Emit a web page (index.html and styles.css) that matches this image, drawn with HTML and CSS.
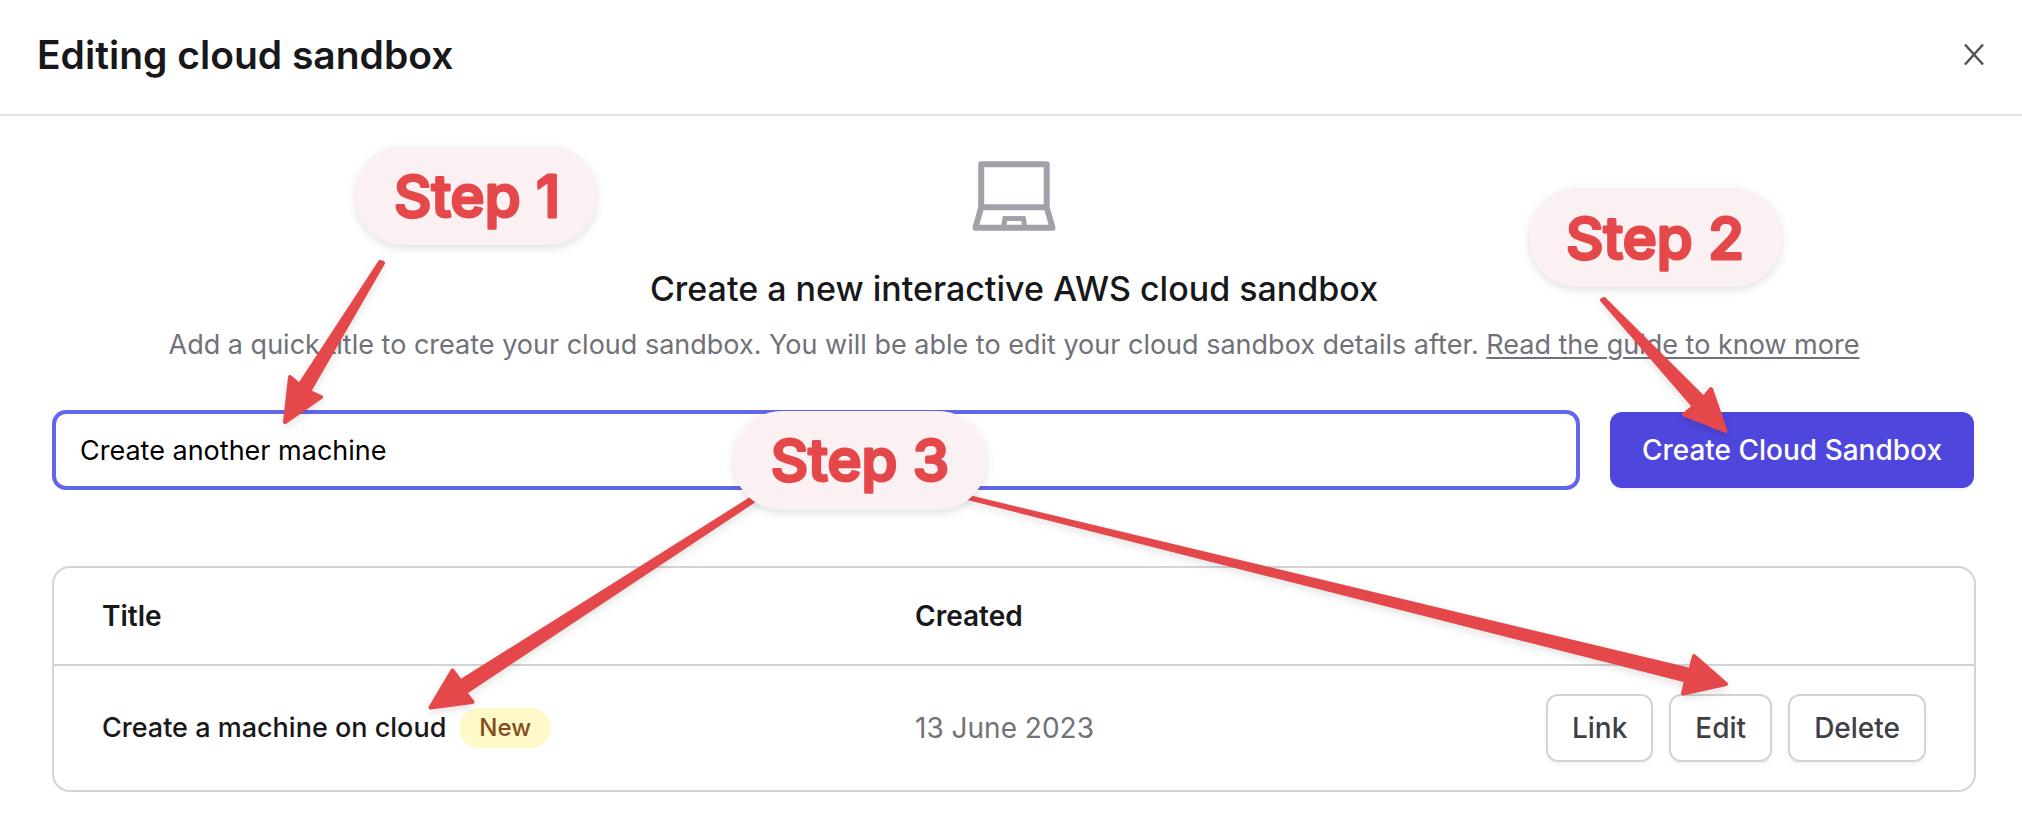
FILE: index.html
```html
<!DOCTYPE html>
<html lang="en">
<head>
<meta charset="utf-8">
<meta name="viewport" content="width=device-width, initial-scale=1">
<title>Editing cloud sandbox</title>
<link rel="stylesheet" href="styles.css">
</head>
<body>
<header class="header">
  <h1 class="header-title">Editing cloud sandbox</h1>
  <button class="close" type="button" aria-label="Close">
    <svg width="22" height="24" viewBox="0 0 22 24" aria-hidden="true"><path d="M2 1.500L20 21.500M20 1.500L2 21.500"/></svg>
  </button>
</header>
<main class="main">
  <section class="intro">
    <svg class="laptop" width="84" height="70" viewBox="0 0 84 70" aria-hidden="true">
      <path d="M9.2 46.3V3.2H74.7V46.3"/>
      <path d="M9.2 46.3H74.7L80.5 66.8H3.5Z"/>
      <path class="laptop-pad" d="M31.5 66.5L33 57.5H51.3L53 66.5"/>
    </svg>
    <h2 class="intro-title">Create a new interactive AWS cloud sandbox</h2>
    <p class="intro-text">Add a quick title to create your cloud sandbox. You will be able to edit your cloud sandbox details after. <a class="guide" href="#guide">Read the guide to know more</a></p>
  </section>
  <form class="form">
    <input class="field" type="text" aria-label="Sandbox title" value="Create another machine">
    <button class="submit" type="button">Create Cloud Sandbox</button>
  </form>
  <div class="card">
    <table class="table">
      <thead>
        <tr><th class="col-title" scope="col">Title</th><th class="col-created" scope="col">Created</th><td></td></tr>
      </thead>
      <tbody>
        <tr>
          <td class="name"><div class="name-row"><span>Create a machine on cloud</span><span class="badge">New</span></div></td>
          <td class="date">13 June 2023</td>
          <td>
            <div class="actions">
              <button class="action" type="button">Link</button>
              <button class="action" type="button">Edit</button>
              <button class="action" type="button">Delete</button>
            </div>
          </td>
        </tr>
      </tbody>
    </table>
  </div>
</main>
<svg class="notes" width="2022" height="826" viewBox="0 0 2022 826">
  <g class="arrow">
    <path d="M380 262L383 263L309 391.5L321 397L285 422L290 377L299.5 385Z"/>
    <path d="M1602 300L1604 299L1703.5 398L1711 389L1725.5 431L1684 414.5L1694 406.5Z"/>
    <path d="M765 490L767 492L465 692.5L472.5 702L430.5 707.5L452.5 670.5L460.5 681.5Z"/>
    <path d="M958 494.5L958 495.5L1686 680.5L1683 693.5L1726 684L1694 656L1690.5 670Z"/>
  </g>
  <g class="pill">
    <rect x="355" y="146" width="242" height="99" rx="49"/>
    <rect x="1529" y="188" width="253" height="99" rx="49"/>
    <rect x="733" y="411" width="254" height="99" rx="49"/>
  </g>
  <g class="step">
    <text x="477" y="217">Step 1</text>
    <text x="1655" y="259">Step 2</text>
    <text x="860" y="481">Step 3</text>
  </g>
</svg>
</body>
</html>
```
FILE: styles.css
```css
* { box-sizing: border-box; }
body {
  position: relative;
  margin: 0;
  background: #fff;
  color: #18181b;
  font-family: Inter, "Liberation Sans", sans-serif;
  font-size: 28px;
  line-height: 40px;
}
h1, h2, p { margin: 0; }
button, input { font: inherit; }
.header {
  display: flex;
  align-items: center;
  justify-content: space-between;
  padding: 28px 37px 32px;
  border-bottom: 2px solid #e4e4e7;
}
.header-title { font-size: 39px; line-height: 54px; font-weight: 600; }
.close {
  display: flex;
  padding: 0;
  border: 0;
  background: none;
}
.close svg { fill: none; stroke: #52525b; stroke-width: 2.5; }
.main { padding: 45px 46px 34px 52px; }
.intro {
  display: flex;
  flex-direction: column;
  align-items: center;
  text-align: center;
}
.laptop {
  fill: none;
  stroke: #a1a1aa;
  stroke-width: 6;
  stroke-linejoin: round;
}
.laptop-pad { stroke-width: 5; stroke-linejoin: miter; }
.intro-title {
  margin-top: 36px;
  font-size: 34px;
  line-height: 44px;
  font-weight: 500;
}
.intro-text { margin-top: 14px; color: #71717a; font-size: 27px; }
.guide { color: inherit; text-underline-offset: 3px; text-decoration-thickness: 2px; }
.form {
  display: flex;
  gap: 32px;
  margin: 47px 2px 0;
}
.field {
  flex: 1;
  min-width: 0;
  height: 76px;
  padding: 0 24px;
  border: 2px solid #6267ea;
  border-radius: 12px;
  outline: none;
  box-shadow: 0 0 0 2px #6267ea;
  background: #fff;
  color: #000;
  font-size: 27px;
}
.submit {
  padding: 18px 32px;
  border: 0;
  border-radius: 12px;
  background: #4f46dd;
  color: #fff;
  font-weight: 500;
  box-shadow: 0 2px 4px rgba(0, 0, 0, .05);
}
.card {
  margin-top: 78px;
  border: 2px solid #d4d4d8;
  border-radius: 18px;
}
.table { width: 100%; border-collapse: collapse; }
.table th, .table td { padding: 28px 0; text-align: left; }
.table tbody td { border-top: 2px solid #d4d4d8; }
.table th { font-weight: 600; }
.table th:first-child, .table td:first-child { padding-left: 48px; }
.table th:last-child, .table td:last-child { padding-right: 48px; }
.col-title { width: 861px; }
.name { font-size: 27px; font-weight: 500; }
.name-row { display: flex; align-items: center; gap: 13px; }
.badge {
  padding: 0 20px;
  border-radius: 20px;
  background: #fef9c8;
  color: #854d1e;
  font-size: 24px;
}
.date { color: #71717a; }
.actions { display: flex; justify-content: flex-end; gap: 16px; }
.action {
  padding: 12px 24px;
  border: 2px solid #d4d4d8;
  border-radius: 12px;
  background: #fff;
  color: #3f3f46;
  font-weight: 500;
  box-shadow: 0 2px 4px rgba(0, 0, 0, .06);
}
.notes {
  position: absolute;
  top: 0;
  left: 0;
  pointer-events: none;
}
.arrow, .pill { filter: drop-shadow(0 3px 4px rgba(0, 0, 0, .12)); }
.arrow path {
  fill: #e5484b;
  stroke: #e5484b;
  stroke-width: 4;
  stroke-linejoin: round;
}
.pill rect { fill: #fbf0f2; }
.step text {
  fill: #e5484b;
  stroke: #e5484b;
  stroke-width: 3;
  stroke-linejoin: round;
  font-size: 58px;
  font-weight: 500;
  text-anchor: middle;
}
```
